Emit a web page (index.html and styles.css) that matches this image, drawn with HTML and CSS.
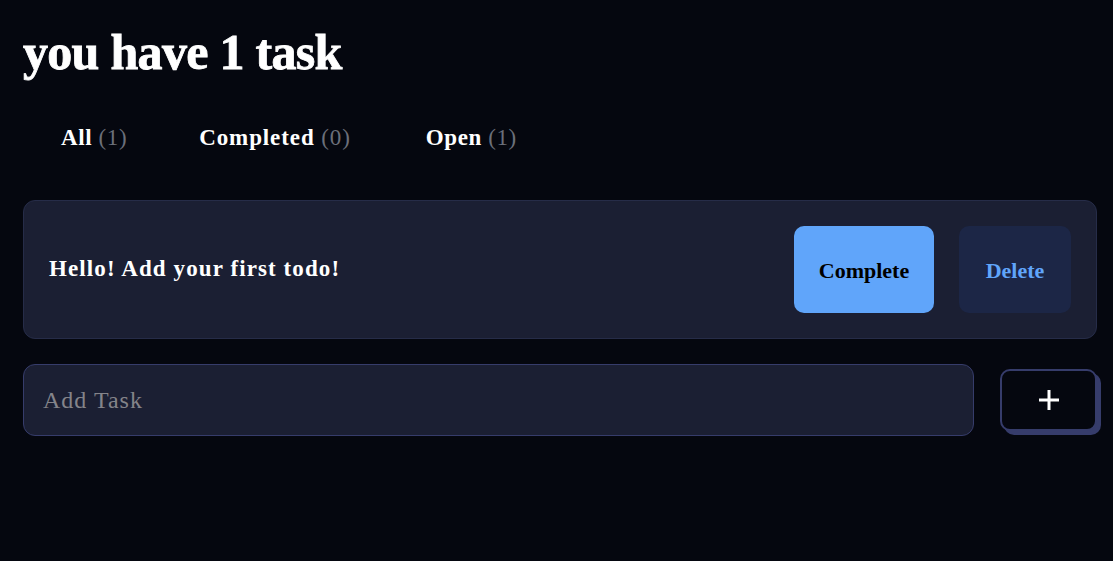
FILE: index.html
```html
<!DOCTYPE html>
<html>
<head>
<meta charset="utf-8">
<link rel="stylesheet" href="styles.css">
</head>
<body>
<main class="app">
  <h1 class="title">you have 1 task</h1>
  <nav class="tabs">
    <span class="tab">All <span class="count">(1)</span></span>
    <span class="tab">Completed <span class="count">(0)</span></span>
    <span class="tab">Open <span class="count">(1)</span></span>
  </nav>
  <div class="card">
    <p class="todo-text">Hello! Add your first todo!</p>
    <div class="actions">
      <button class="btn btn-complete">Complete</button>
      <button class="btn btn-delete">Delete</button>
    </div>
  </div>
  <div class="add-row">
    <input class="add-input" type="text" placeholder="Add Task">
    <button class="add-btn" aria-label="Add">
      <svg width="22" height="22" viewBox="0 0 22 22"><path d="M11 1v20M1 11h20" stroke="#fff" stroke-width="3"/></svg>
    </button>
  </div>
</main>
</body>
</html>
```
FILE: styles.css
```css
* { box-sizing: border-box; }
html, body { margin: 0; padding: 0; background: #05070f; }
body {
  font-family: "Liberation Serif", "Times New Roman", serif;
  color: #fff;
}
.app {
  padding: 25px 16px 0 23px;
  display: flex;
  flex-direction: column;
}
.title {
  margin: 0;
  font-size: 50px;
  font-weight: 700;
  line-height: 54px;
  letter-spacing: -0.7px;
  -webkit-text-stroke: 0.8px #fff;
}
.tabs {
  display: flex;
  gap: 73px;
  padding: 46px 0 0 38px;
  font-size: 23px;
  font-weight: 700;
  line-height: 26px;
  letter-spacing: 0.6px;
}
.tab:nth-child(2) { margin-left: -1px; letter-spacing: 0.9px; }
.tab:nth-child(3) { margin-left: 2px; }
.count { color: #6b6f7a; font-weight: 400; }
.card {
  margin-top: 49px;
  background: #1b1f33;
  border: 1px solid #262c48;
  border-radius: 12px;
  height: 139px;
  display: flex;
  align-items: center;
  justify-content: space-between;
  padding: 0 25px 0 25px;
}
.todo-text {
  margin: 0;
  font-size: 23px;
  font-weight: 700;
  letter-spacing: 1.1px;
  padding-bottom: 2px;
}
.actions { display: flex; gap: 25px; }
.btn {
  font-family: inherit;
  font-weight: 700;
  font-size: 22px;
  border: none;
  height: 87px;
  border-radius: 10px;
  padding: 0;
  padding-top: 2px;
}
.btn-complete { width: 140px; background: #60a5fa; color: #000; }
.btn-delete { width: 112px; background: #1c2646; color: #60a5fa; }
.add-row {
  margin-top: 25px;
  display: flex;
  gap: 26px;
  align-items: center;
}
.add-input {
  flex: 1;
  height: 72px;
  background: #1b1f33;
  border: 1px solid #363c6b;
  border-radius: 12px;
  font-family: inherit;
  font-size: 24px;
  letter-spacing: 1px;
  color: #fff;
  padding: 0 19px;
  outline: none;
}
.add-input::placeholder { color: #84848a; }
.add-btn {
  width: 97px;
  height: 62px;
  background: #05070f;
  border: 2px solid #363c6b;
  border-radius: 10px;
  box-shadow: 4px 4px 0 #363c6b;
  display: flex;
  align-items: center;
  justify-content: center;
}
```
